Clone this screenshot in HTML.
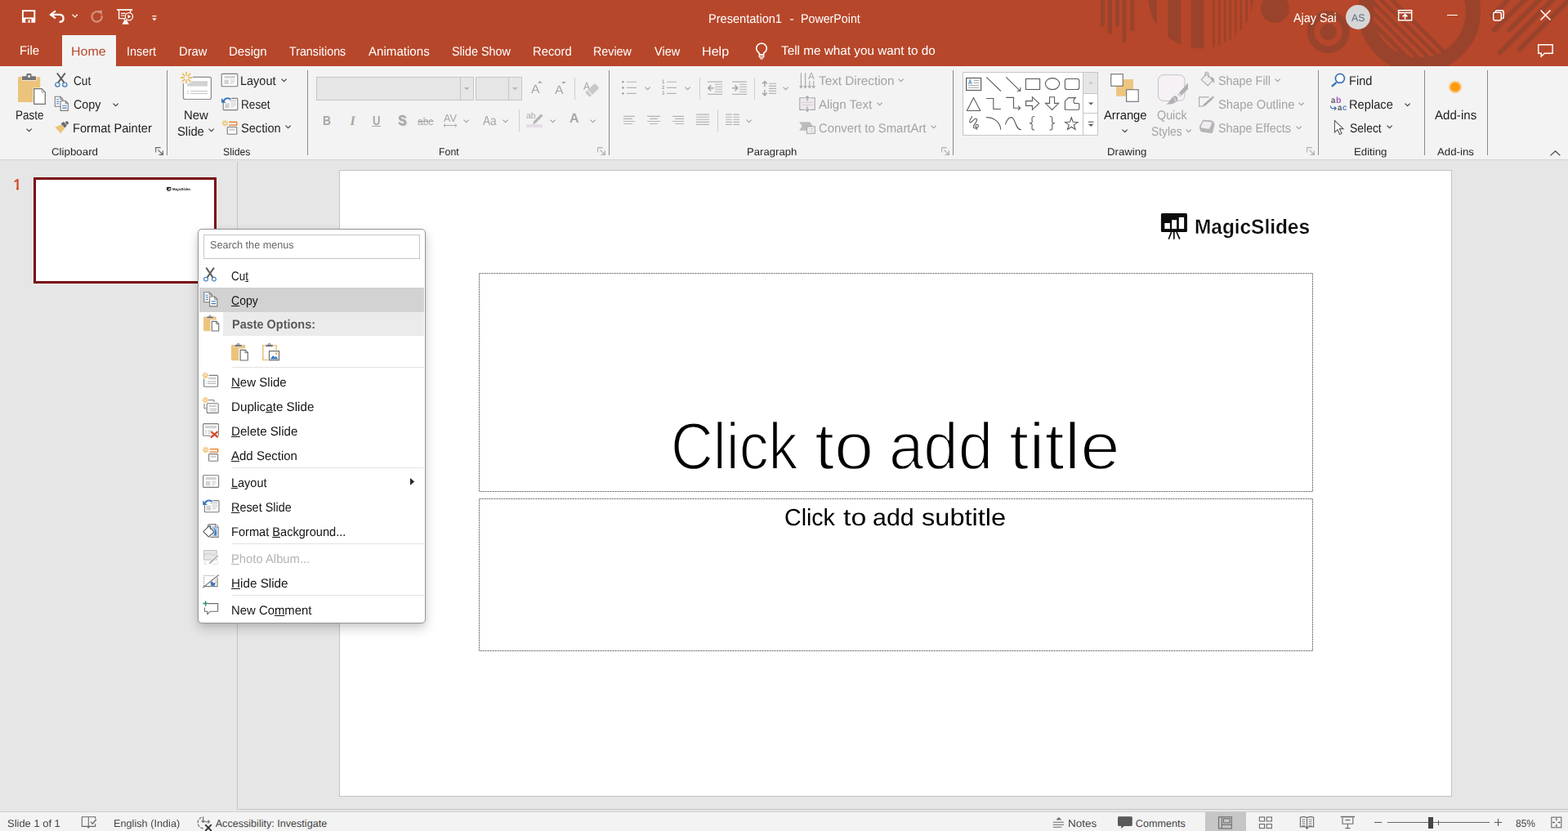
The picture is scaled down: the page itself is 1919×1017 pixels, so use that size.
<!DOCTYPE html>
<html lang="en"><head><meta charset="utf-8"><title>Presentation1 - PowerPoint</title>
<style>
html,body{margin:0;padding:0}
body{width:1919px;height:1017px;overflow:hidden;position:relative;background:#e6e6e6;font-family:"Liberation Sans",sans-serif;text-rendering:geometricPrecision}
#app{position:absolute;left:0;top:0;width:1919px;height:1017px;overflow:hidden}
#app div,#app svg,#app span{position:absolute}
#app span{white-space:nowrap;line-height:1;transform-origin:0 0;display:block}
#app span u{position:static;text-decoration:underline;text-underline-offset:.5px;text-decoration-thickness:1px}
#app svg{overflow:visible}
</style></head>
<body><div id="app">
<div style="left:0px;top:0px;width:1919px;height:81px;background:#b7472a"></div>
<div style="left:0px;top:81px;width:1919px;height:114px;background:#f3f3f3"></div>
<div style="left:0px;top:195px;width:1919px;height:1px;background:#d4d4d4"></div>
<div style="left:0px;top:993px;width:1919px;height:24px;background:#f3f3f3"></div>
<svg style="left:0;top:0" width="1919" height="81" viewBox="0 0 1919 81" fill="#9a432c"><clipPath id="tb"><rect width="1919" height="81"/></clipPath><g clip-path="url(#tb)"><rect x="1346.9" y="0" width="5.0" height="32"/><rect x="1355.8" y="0" width="5.2" height="41.4"/><rect x="1365.2" y="0" width="4.6" height="32"/><rect x="1373.4" y="0" width="5.0" height="51.6"/><rect x="1383" y="0" width="5.3" height="37.8"/><clipPath id="hc"><circle cx="1469.5" cy="-5" r="64.5"/></clipPath><g clip-path="url(#hc)"><rect x="1405" y="0" width="11.0" height="62"/><rect x="1429" y="0" width="16.3" height="62"/><rect x="1457.8" y="0" width="15.6" height="62"/><rect x="1484" y="0" width="2.7" height="62"/><rect x="1491" y="0" width="2.6" height="62"/><rect x="1498" y="0" width="2.2" height="62"/><rect x="1504.2" y="0" width="2.7" height="62"/><rect x="1511" y="0" width="2.3" height="62"/><rect x="1517.5" y="0" width="2.5" height="62"/><rect x="1524.2" y="0" width="2.8" height="62"/><rect x="1530.8" y="0" width="3.2" height="62"/></g><circle cx="1560.5" cy="10.5" r="17.5"/><circle cx="1625.6" cy="39" r="10.2"/><circle cx="1625.6" cy="39" r="21.5" fill="none" stroke="#9a432c" stroke-width="9"/><circle cx="1737.2" cy="14" r="65.7" fill="none" stroke="#9a432c" stroke-width="18.5"/><clipPath id="bc"><circle cx="1737.2" cy="14" r="57.5"/></clipPath><g clip-path="url(#bc)" stroke="#9a432c"><line x1="1673.45" y1="-30" x2="1813.45" y2="110" stroke-width="5.0"/><line x1="1660.65" y1="-30" x2="1800.65" y2="110" stroke-width="4.74"/><line x1="1647.65" y1="-30" x2="1787.65" y2="110" stroke-width="4.74"/><line x1="1635.05" y1="-30" x2="1775.05" y2="110" stroke-width="4.74"/><line x1="1621.90" y1="-30" x2="1761.90" y2="110" stroke-width="5.5"/></g><g stroke="#9a432c" stroke-width="6"><line x1="1825.0" y1="20.3" x2="1865.3" y2="-20"/><line x1="1826.7" y1="38.7" x2="1885.4" y2="-20"/><line x1="1845.2" y1="38.5" x2="1903.7" y2="-20"/><line x1="1833.8" y1="66.1" x2="1919.9" y2="-20"/><line x1="1858.2" y1="62.1" x2="1940.3" y2="-20"/></g></g></svg>
<svg style="left:27px;top:12px" width="17" height="16" viewBox="0 0 17 16" ><rect x=".9" y="1.200" width="14.400" height="13.600" fill="none" stroke="#fff" stroke-width="1.900"/><rect x="1" y="9.400" width="14" height="5.600" fill="#fff"/><rect x="4.200" y="11.200" width="7.200" height="4.400" fill="#b7472a"/><rect x="7.600" y="12.300" width="2" height="3.300" fill="#fff"/></svg>
<svg style="left:60px;top:12px" width="20" height="17" viewBox="0 0 20 17" ><path d="M8 1.400 2 5.900l6 4.500" fill="none" stroke="#fff" stroke-width="2.300" stroke-linejoin="miter"/><path d="M2.600 5.900h9.600c3.800 0 5.400 2.200 5.400 4.600 0 2.600-2 4.400-5 4.400" fill="none" stroke="#fff" stroke-width="2.300"/></svg>
<svg style="left:88px;top:17px" width="8" height="5" viewBox="0 0 8 5" ><path d="M.6.8 3.700 3.900 6.800.8" fill="none" stroke="#fff" stroke-width="1.300"/></svg>
<svg style="left:109.5px;top:11.5px" width="17" height="17" viewBox="0 0 17 17" ><path d="M12.200 3.400A6.200 6.200 0 1 0 14.600 7" fill="none" stroke="#d4917f" stroke-width="2.200"/><path d="M9.600 1.200l5.400-.6-.6 6z" fill="#d4917f"/></svg>
<svg style="left:143px;top:10.5px" width="20" height="19" viewBox="0 0 20 19" ><g fill="none" stroke="#fff" stroke-width="1.400"><path d="M0 1h19.200" stroke-width="1.700"/><path d="M2.600 1.400v10.200h7.200M16.600 1.400v3"/><path d="M5 5.400h5.600M5 8h4.400" stroke-width="1.100"/><path d="M7.600 18.100l2.200-3.900h1.600l2.200 3.900z" fill="#fff"/><path d="M9 12v1.600"/></g><circle cx="14.900" cy="9.300" r="4.600" fill="#b7472a" stroke="#fff" stroke-width="1.300"/><path d="M13.500 6.900v4.800l3.700-2.400z" fill="#fff"/></svg>
<svg style="left:185.5px;top:18.5px" width="6" height="7" viewBox="0 0 6 7" ><path d="M.3 .7h5.200" stroke="#fff" stroke-width="1.200"/><path d="M.2 3.300h5.400L2.900 6.400z" fill="#fff"/></svg>
<span style="left:867.35px;top:16.0px;font-size:15.4px;color:#fff;transform:scaleX(0.9474);">Presentation1</span>
<span style="left:966.60px;top:16.0px;font-size:15.4px;color:#fff;">-</span>
<span style="left:979.58px;top:16.0px;font-size:15.4px;color:#fff;transform:scaleX(0.9244);">PowerPoint</span>
<span style="left:1583.20px;top:15.0px;font-size:15.4px;color:#fff;transform:scaleX(0.9350);">Ajay Sai</span>
<div style="left:1647px;top:6px;width:30px;height:30px;border-radius:50%;background:#d6d6d6"></div>
<span style="left:1654.00px;top:16.0px;font-size:12.5px;color:#5a6b7e;transform:scaleX(0.9793);">AS</span>
<svg style="left:1711px;top:12px" width="18" height="14" viewBox="0 0 18 14" ><g fill="none" stroke="#fff" stroke-width="1.5"><rect x=".65" y=".65" width="16" height="12.2"/><path d="M.6 3.6h16.2"/><path d="M8.6 11.6V5.8M5.8 8.4 8.6 5.6l2.8 2.8"/></g></svg>
<div style="left:1771px;top:17.6px;width:12.5px;height:1.3px;background:#fff"></div>
<svg style="left:1827px;top:12px" width="14" height="14" viewBox="0 0 14 14" ><g fill="none" stroke="#fff" stroke-width="1.5"><rect x=".7" y="3.3" width="9.6" height="9.6" rx="1.6"/><path d="M3.4 3.2V2.4Q3.4.7 5.2.7h5.6q2.4 0 2.4 2.4v5.6q0 1.8-1.7 1.8h-1"/></g></svg>
<svg style="left:1884.5px;top:12.4px" width="13" height="13" viewBox="0 0 13 13" ><path d="M.5.5l12 12M12.5.5l-12 12" stroke="#fff" stroke-width="1.5" fill="none"/></svg>
<svg style="left:1881.5px;top:54px" width="19" height="16" viewBox="0 0 19 16" ><path d="M.7.7h17.4v10.6H8.4L4.2 15v-3.7H.7z" fill="none" stroke="#fff" stroke-width="1.5" stroke-linejoin="miter"/></svg>
<div style="left:76px;top:43px;width:66px;height:39px;background:#f3f3f3"></div>
<span style="left:24.03px;top:55.0px;font-size:15.4px;color:#fff;transform:scaleX(0.9682);">File</span>
<span style="left:86.96px;top:56.0px;font-size:15.4px;color:#b7472a;transform:scaleX(1.0381);">Home</span>
<span style="left:155.37px;top:56.0px;font-size:15.4px;color:#fff;transform:scaleX(0.9342);">Insert</span>
<span style="left:218.54px;top:56.0px;font-size:15.4px;color:#fff;transform:scaleX(0.9581);">Draw</span>
<span style="left:280.32px;top:56.0px;font-size:15.4px;color:#fff;transform:scaleX(0.9752);">Design</span>
<span style="left:354.30px;top:56.0px;font-size:15.4px;color:#fff;transform:scaleX(0.9266);">Transitions</span>
<span style="left:451.00px;top:56.0px;font-size:15.4px;color:#fff;transform:scaleX(0.9812);">Animations</span>
<span style="left:553.30px;top:56.0px;font-size:15.4px;color:#fff;transform:scaleX(0.9334);">Slide Show</span>
<span style="left:652.34px;top:56.0px;font-size:15.4px;color:#fff;transform:scaleX(0.9614);">Record</span>
<span style="left:726.07px;top:56.0px;font-size:15.4px;color:#fff;transform:scaleX(0.9295);">Review</span>
<span style="left:800.80px;top:56.0px;font-size:15.4px;color:#fff;transform:scaleX(0.9421);">View</span>
<span style="left:858.95px;top:56.0px;font-size:15.4px;color:#fff;transform:scaleX(1.0467);">Help</span>
<span style="left:956.30px;top:55.0px;font-size:15.4px;color:#fff;transform:scaleX(0.9939);">Tell me what you want to do</span>
<svg style="left:924px;top:52px" width="17" height="21" viewBox="0 0 17 21" ><g fill="none" stroke="#fff" stroke-width="1.500"><path d="M5.300 14.600v-1.400C3.200 11.600 1.700 9.900 1.700 7.300a6.300 6.300 0 0 1 12.600 0c0 2.600-1.500 4.300-3.600 5.900v1.400"/><path d="M5.300 14.600h5.400v3.300H5.300zM6.200 19.900h3.600" stroke-width="1.300"/><path d="M5.300 15.700h5.400" stroke-width="1"/></g></svg>
<div style="left:204.0px;top:86px;width:1px;height:104px;background:#8a8a8a"></div>
<div style="left:375.9px;top:86px;width:1px;height:104px;background:#8a8a8a"></div>
<div style="left:744.7px;top:86px;width:1px;height:104px;background:#8a8a8a"></div>
<div style="left:1166.0px;top:86px;width:1px;height:104px;background:#8a8a8a"></div>
<div style="left:1613.1px;top:86px;width:1px;height:104px;background:#8a8a8a"></div>
<div style="left:1742.8px;top:86px;width:1px;height:104px;background:#8a8a8a"></div>
<div style="left:1819.9px;top:86px;width:1px;height:104px;background:#8a8a8a"></div>
<span style="left:63.40px;top:180.0px;font-size:12.6px;color:#262626;transform:scaleX(1.0575);">Clipboard</span>
<span style="left:273.30px;top:180.0px;font-size:12.6px;color:#262626;transform:scaleX(0.9764);">Slides</span>
<span style="left:537.32px;top:180.0px;font-size:12.6px;color:#262626;transform:scaleX(0.9797);">Font</span>
<span style="left:914.36px;top:180.0px;font-size:12.6px;color:#262626;transform:scaleX(1.0431);">Paragraph</span>
<span style="left:1355.45px;top:180.0px;font-size:12.6px;color:#262626;transform:scaleX(1.0467);">Drawing</span>
<span style="left:1657.15px;top:180.0px;font-size:12.6px;color:#262626;transform:scaleX(1.0506);">Editing</span>
<span style="left:1759.00px;top:180.0px;font-size:12.6px;color:#262626;transform:scaleX(1.0518);">Add-ins</span>
<svg style="left:189.7px;top:179.5px" width="11" height="11" viewBox="0 0 11 11" ><path d="M.6 6.600V.6H6.600" fill="none" stroke="#666" stroke-width="1.100"/><path d="M3.400 3.400 9 9M4.600 9.300h4.700V4.600" fill="none" stroke="#666" stroke-width="1.200"/></svg>
<svg style="left:730.5px;top:179.5px" width="11" height="11" viewBox="0 0 11 11" ><path d="M.6 6.600V.6H6.600" fill="none" stroke="#b0b0b0" stroke-width="1.100"/><path d="M3.400 3.400 9 9M4.600 9.300h4.700V4.600" fill="none" stroke="#b0b0b0" stroke-width="1.200"/></svg>
<svg style="left:1152px;top:179.5px" width="11" height="11" viewBox="0 0 11 11" ><path d="M.6 6.600V.6H6.600" fill="none" stroke="#b0b0b0" stroke-width="1.100"/><path d="M3.400 3.400 9 9M4.600 9.300h4.700V4.600" fill="none" stroke="#b0b0b0" stroke-width="1.200"/></svg>
<svg style="left:1599px;top:179.5px" width="11" height="11" viewBox="0 0 11 11" ><path d="M.6 6.600V.6H6.600" fill="none" stroke="#b0b0b0" stroke-width="1.100"/><path d="M3.400 3.400 9 9M4.600 9.300h4.700V4.600" fill="none" stroke="#b0b0b0" stroke-width="1.200"/></svg>
<svg style="left:1896.5px;top:183.5px" width="13" height="7" viewBox="0 0 13 7" ><path d="M.6 6.4 6.5 .8 12.4 6.4" fill="none" stroke="#444" stroke-width="1.3"/></svg>
<span style="left:19.03px;top:134.0px;font-size:15.4px;color:#1e1e1e;transform:scaleX(0.8731);">Paste</span>
<svg style="left:31.7px;top:157px" width="7.2" height="5" viewBox="0 0 7.2 5" ><path d="M.5 .6 3.60 3.70 6.70 .6" fill="none" stroke="#444" stroke-width="1.25"/></svg>
<span style="left:90.30px;top:92.0px;font-size:15.4px;color:#1e1e1e;transform:scaleX(0.8835);">Cut</span>
<span style="left:90.00px;top:121.0px;font-size:15.4px;color:#1e1e1e;transform:scaleX(0.9328);">Copy</span>
<svg style="left:137.6px;top:125.5px" width="7.2" height="5" viewBox="0 0 7.2 5" ><path d="M.5 .6 3.60 3.70 6.70 .6" fill="none" stroke="#444" stroke-width="1.25"/></svg>
<span style="left:89.05px;top:150.0px;font-size:15.4px;color:#1e1e1e;transform:scaleX(0.9507);">Format Painter</span>
<span style="left:225.33px;top:134.0px;font-size:15.4px;color:#1e1e1e;transform:scaleX(0.9682);">New</span>
<span style="left:217.20px;top:154.0px;font-size:15.4px;color:#1e1e1e;transform:scaleX(0.9595);">Slide</span>
<svg style="left:254.8px;top:157.2px" width="7.2" height="5" viewBox="0 0 7.2 5" ><path d="M.5 .6 3.60 3.70 6.70 .6" fill="none" stroke="#444" stroke-width="1.25"/></svg>
<span style="left:294.46px;top:92.0px;font-size:15.4px;color:#1e1e1e;transform:scaleX(0.9405);">Layout</span>
<svg style="left:344px;top:95.6px" width="7.2" height="5" viewBox="0 0 7.2 5" ><path d="M.5 .6 3.60 3.70 6.70 .6" fill="none" stroke="#444" stroke-width="1.25"/></svg>
<span style="left:294.52px;top:121.0px;font-size:15.4px;color:#1e1e1e;transform:scaleX(0.8841);">Reset</span>
<span style="left:295.40px;top:150.0px;font-size:15.4px;color:#1e1e1e;transform:scaleX(0.9493);">Section</span>
<svg style="left:349px;top:153px" width="7.2" height="5" viewBox="0 0 7.2 5" ><path d="M.5 .6 3.60 3.70 6.70 .6" fill="none" stroke="#444" stroke-width="1.25"/></svg>
<div style="left:387px;top:94px;width:193px;height:29px;background:#e6e6e6;border:1px solid #c6c6c6;box-sizing:border-box"></div>
<div style="left:563px;top:94px;width:1px;height:29px;background:#c6c6c6"></div>
<svg style="left:568px;top:107px" width="7" height="4" viewBox="0 0 7 4" ><path d="M0 0h6.4L3.2 3.2z" fill="#b4b4b4"/></svg>
<div style="left:582px;top:94px;width:57px;height:29px;background:#e6e6e6;border:1px solid #c6c6c6;box-sizing:border-box"></div>
<div style="left:622px;top:94px;width:1px;height:29px;background:#c6c6c6"></div>
<svg style="left:626.6px;top:107px" width="7" height="4" viewBox="0 0 7 4" ><path d="M0 0h6.4L3.2 3.2z" fill="#b4b4b4"/></svg>
<div style="left:703.2px;top:95px;width:1px;height:27px;background:#cfcfcf"></div>
<div style="left:634.8px;top:134px;width:1px;height:27px;background:#cfcfcf"></div>
<div style="left:856px;top:95px;width:1px;height:27px;background:#cfcfcf"></div>
<div style="left:923px;top:95px;width:1px;height:27px;background:#cfcfcf"></div>
<div style="left:878px;top:134px;width:1px;height:27px;background:#cfcfcf"></div>
<span style="left:1001.80px;top:92.0px;font-size:15.4px;color:#a3a3a3;transform:scaleX(0.9928);">Text Direction</span>
<svg style="left:1098.9px;top:95.5px" width="7.2" height="5" viewBox="0 0 7.2 5" ><path d="M.5 .6 3.60 3.70 6.70 .6" fill="none" stroke="#a3a3a3" stroke-width="1.25"/></svg>
<span style="left:1001.80px;top:121.0px;font-size:15.4px;color:#a3a3a3;transform:scaleX(0.9815);">Align Text</span>
<svg style="left:1073px;top:124.5px" width="7.2" height="5" viewBox="0 0 7.2 5" ><path d="M.5 .6 3.60 3.70 6.70 .6" fill="none" stroke="#a3a3a3" stroke-width="1.25"/></svg>
<span style="left:1001.80px;top:150.0px;font-size:15.4px;color:#a3a3a3;transform:scaleX(0.9670);">Convert to SmartArt</span>
<svg style="left:1139px;top:153.2px" width="7.2" height="5" viewBox="0 0 7.2 5" ><path d="M.5 .6 3.60 3.70 6.70 .6" fill="none" stroke="#a3a3a3" stroke-width="1.25"/></svg>
<div style="left:1178px;top:88px;width:166px;height:78px;background:#fff;border:1px solid #c6c6c6;box-sizing:border-box"></div>
<div style="left:1325px;top:88px;width:19px;height:27px;background:#e6e6e6;border:1px solid #c6c6c6;box-sizing:border-box"></div>
<div style="left:1325px;top:114px;width:19px;height:25px;background:#fff;border:1px solid #c6c6c6;box-sizing:border-box"></div>
<div style="left:1325px;top:138px;width:19px;height:28px;background:#fff;border:1px solid #c6c6c6;box-sizing:border-box"></div>
<span style="left:1350.60px;top:134.0px;font-size:15.4px;color:#1e1e1e;transform:scaleX(0.9595);">Arrange</span>
<svg style="left:1372.8px;top:157.6px" width="7.2" height="5" viewBox="0 0 7.2 5" ><path d="M.5 .6 3.60 3.70 6.70 .6" fill="none" stroke="#444" stroke-width="1.25"/></svg>
<span style="left:1416.00px;top:134.0px;font-size:15.4px;color:#a3a3a3;transform:scaleX(0.9307);">Quick</span>
<span style="left:1408.60px;top:154.0px;font-size:15.4px;color:#a3a3a3;transform:scaleX(0.8954);">Styles</span>
<svg style="left:1451.2px;top:157.6px" width="7.2" height="5" viewBox="0 0 7.2 5" ><path d="M.5 .6 3.60 3.70 6.70 .6" fill="none" stroke="#a3a3a3" stroke-width="1.25"/></svg>
<span style="left:1490.70px;top:92.0px;font-size:15.4px;color:#a3a3a3;transform:scaleX(0.9350);">Shape Fill</span>
<svg style="left:1559.8px;top:95.8px" width="7.2" height="5" viewBox="0 0 7.2 5" ><path d="M.5 .6 3.60 3.70 6.70 .6" fill="none" stroke="#a3a3a3" stroke-width="1.25"/></svg>
<span style="left:1490.70px;top:121.0px;font-size:15.4px;color:#a3a3a3;transform:scaleX(0.9569);">Shape Outline</span>
<svg style="left:1589px;top:124.6px" width="7.2" height="5" viewBox="0 0 7.2 5" ><path d="M.5 .6 3.60 3.70 6.70 .6" fill="none" stroke="#a3a3a3" stroke-width="1.25"/></svg>
<span style="left:1490.70px;top:150.0px;font-size:15.4px;color:#a3a3a3;transform:scaleX(0.9317);">Shape Effects</span>
<svg style="left:1585.5px;top:153.8px" width="7.2" height="5" viewBox="0 0 7.2 5" ><path d="M.5 .6 3.60 3.70 6.70 .6" fill="none" stroke="#a3a3a3" stroke-width="1.25"/></svg>
<span style="left:1651.45px;top:92.0px;font-size:15.4px;color:#1e1e1e;transform:scaleX(0.9478);">Find</span>
<span style="left:1651.45px;top:121.0px;font-size:15.4px;color:#1e1e1e;transform:scaleX(0.9525);">Replace</span>
<svg style="left:1718.8px;top:125.6px" width="7.2" height="5" viewBox="0 0 7.2 5" ><path d="M.5 .6 3.60 3.70 6.70 .6" fill="none" stroke="#444" stroke-width="1.25"/></svg>
<span style="left:1652.40px;top:150.0px;font-size:15.4px;color:#1e1e1e;transform:scaleX(0.9058);">Select</span>
<svg style="left:1696.9px;top:153.2px" width="7.2" height="5" viewBox="0 0 7.2 5" ><path d="M.5 .6 3.60 3.70 6.70 .6" fill="none" stroke="#444" stroke-width="1.25"/></svg>
<span style="left:1756.30px;top:134.0px;font-size:15.4px;color:#1e1e1e;transform:scaleX(0.9812);">Add-ins</span>
<div style="left:1774px;top:99.800px;width:13.600px;height:13.600px;border-radius:50%;background:#ff9a0d;filter:blur(.9px)"></div>
<svg style="left:20px;top:88px" width="38" height="42" viewBox="20 88 38 42" ><rect x="22" y="94" width="27.2" height="31" rx="1.6" fill="#ecc37a"/>
<path d="M26.4 98.8v-4.4q0-1.6 1.6-1.6h3.8v-1.4q0-1.6 1.6-1.6h3.8q1.6 0 1.6 1.6v1.4H43q1.6 0 1.6 1.6v4.4z" fill="#f3f3f3"/>
<path d="M26.9 98v-3.6q0-1.2 1.2-1.2h4.2v-2q0-1.2 1.2-1.2h3.8q1.2 0 1.2 1.2v2h4.3q1.2 0 1.2 1.2V98z" fill="#757575"/>
<rect x="34.3" y="92" width="2.6" height="2.8" fill="#f3f3f3"/>
<path d="M40.4 107.4h11.2l5 5v16.2H40.4z" fill="#f3f3f3"/>
<path d="M41.7 108.7h9.4l4.2 4.2v14.4H41.7z" fill="#fff" stroke="#6e6e6e" stroke-width="1.2"/>
<path d="M51.1 108.9v4h4" fill="none" stroke="#9a9a9a" stroke-width="1"/></svg>
<svg style="left:66px;top:88px" width="18" height="20" viewBox="66 88 18 20" ><path d="M69.900 89.500 78.400 101M79.700 89.500 71.200 101" fill="none" stroke="#5e5e5e" stroke-width="2.100"/>
<circle cx="70.4" cy="103.6" r="2.6" fill="none" stroke="#3b77bc" stroke-width="1.2"/><circle cx="79.3" cy="103.6" r="2.6" fill="none" stroke="#3b77bc" stroke-width="1.2"/></svg>
<svg style="left:66px;top:117px" width="19" height="20" viewBox="66 117 19 20" ><g transform="translate(66.7 117.7)"><path d="M.6.6h6.6l3 3v9H.6z" fill="#fff" stroke="#7a7a7a" stroke-width="1.1"/><path d="M7 .8v3h3" fill="none" stroke="#7a7a7a" stroke-width="1"/>
<path d="M2.4 4h3M2.4 6.6h3.4M2.4 9.2h3.4" stroke="#3b77bc" stroke-width="1"/>
<path d="M7.4 5.8h6.2l3 3v8.9H7.4z" fill="#fff" stroke="#7a7a7a" stroke-width="1.1"/><path d="M13.4 6v3h3" fill="none" stroke="#7a7a7a" stroke-width="1"/>
<path d="M9.4 11.6h5.6M9.4 14.4h5.6" stroke="#3b77bc" stroke-width="1.1"/></g></svg>
<svg style="left:66px;top:147px" width="20" height="18" viewBox="66 147 20 18" ><path d="M67.4 155.6l7.6-3.2 4.4 4.6-5.4 6.2z" fill="#ecc37a"/>
<path d="M74.6 151.4l3-2.4 4.4 4.6-2.6 2.8z" fill="#6a6a6a"/><path d="M79.4 150l2.6-2 2.4 2.4-2.2 2.4z" fill="#6a6a6a"/></svg>
<svg style="left:220px;top:86px" width="40" height="37" viewBox="220 86 40 37" ><rect x="224.4" y="94.3" width="34" height="27.2" rx="2" fill="#fff" stroke="#8a8a8a" stroke-width="1.2"/>
<rect x="229" y="99.2" width="25" height="6.4" fill="#d2d2d2"/>
<path d="M229 111.5h2.2M233.2 111.5h20.8M229 114.5h2.2M233.2 114.5h20.8" stroke="#c4c4c4" stroke-width="1"/>
<circle cx="228.1" cy="95" r="8" fill="#f3f3f3"/><path d="M228.10 97.40L228.10 102.20M226.40 96.70L223.01 100.09M225.70 95.00L220.90 95.00M226.40 93.30L223.01 89.91M228.10 92.60L228.10 87.80M229.80 93.30L233.19 89.91M230.50 95.00L235.30 95.00M229.80 96.70L233.19 100.09" stroke="#ecc06e" stroke-width="1.9" fill="none"/></svg>
<svg style="left:270px;top:89px" width="22" height="18" viewBox="270 89 22 18" ><rect x="271.2" y="90.4" width="19.6" height="15.4" rx="1" fill="#fff" stroke="#7a7a7a" stroke-width="1.1"/>
<rect x="274.4" y="92.60000000000001" width="13.400000000000002" height="3.2" fill="#d2d2d2"/><rect x="274.4" y="97.5" width="5.6" height="5.4" fill="#d2d2d2"/>
<path d="M282.0 97.9h5.600000000000001M282.0 100.0h5.600000000000001M282.0 102.10000000000001h3.6000000000000014" stroke="#c0c0c0" stroke-width=".9"/></svg>
<svg style="left:270px;top:117px" width="22" height="19" viewBox="270 117 22 19" ><g transform="translate(271 118)"><rect x="2.2" y="2.4" width="17.6" height="14.2" rx="1" fill="#fff" stroke="#7a7a7a" stroke-width="1.1"/>
<rect x="9.4" y="4.2" width="8.6" height="2" fill="#d2d2d2"/><rect x="4.3" y="8.3" width="5.4" height="6.3" fill="#d2d2d2"/>
<path d="M11.2 7.9h6.8M11.2 10.1h6.8M11.2 12.3h5" stroke="#c0c0c0" stroke-width=".9"/>
<path d="M-.4 0h6.2v6.2H-.4z" fill="#f3f3f3" opacity="0"/>
<path d="M2.6 6.2C3 2.4 7.4.6 11.6 3.4" fill="none" stroke="#fff" stroke-width="4"/>
<path d="M2.8 6C3.4 2.6 7.6 1 11.4 3.6" fill="none" stroke="#3b77bc" stroke-width="2"/><path d="M0 2.2v5.6h5.6z" fill="#3b77bc"/></g></svg>
<svg style="left:270px;top:146px" width="22" height="20" viewBox="270 146 22 20" ><g transform="translate(271 146.9)"><path d="M4.40 5.10L4.40 7.80M3.55 4.75L1.64 6.66M3.20 3.90L0.50 3.90M3.55 3.05L1.64 1.14M4.40 2.70L4.40 0.00M5.25 3.05L7.16 1.14M5.60 3.90L8.30 3.90M5.25 4.75L7.16 6.66" stroke="#ecc06e" stroke-width="1.3" fill="none"/><path d="M9 2.5h9.8v3.8H9" fill="none" stroke="#e8751a" stroke-width="1.2"/>
<rect x="7.2" y="8.6" width="11.6" height="8.7" rx=".8" fill="#fff" stroke="#7a7a7a" stroke-width="1.1"/><rect x="9.3" y="10.4" width="7.4" height="2.6" fill="#d2d2d2"/></g></svg>
<span style="left:650.00px;top:102.0px;font-size:15px;color:#a6a6a6;transform:scaleX(1.0600);">A</span>
<svg style="left:658px;top:99px" width="6" height="3" viewBox="0 0 6 3" ><path d="M0 2.8h5.8L2.9 0z" fill="#a6a6a6"/></svg>
<span style="left:679.00px;top:103.0px;font-size:15px;color:#a6a6a6;transform:scaleX(1.0600);">A</span>
<svg style="left:687px;top:100px" width="6" height="3" viewBox="0 0 6 3" ><path d="M0 0h5.8L2.9 2.8z" fill="#a6a6a6"/></svg>
<span style="left:714.20px;top:99.0px;font-size:13.5px;color:#a6a6a6;transform:scaleX(0.8889);">A</span>
<svg style="left:716px;top:101px" width="17" height="17" viewBox="716 101 17 17" ><g transform="rotate(-42 724.5 110.5)"><rect x="716.6" y="106.6" width="16.4" height="8" rx="1.4" fill="#c9c7c9"/><rect x="720.2" y="106" width="1.1" height="9.4" fill="#f3f3f3"/></g></svg>
<span style="left:394.73px;top:141.0px;font-size:16px;color:#a6a6a6;transform:scaleX(0.8700);font-weight:bold">B</span>
<span style="left:428.40px;top:141.0px;font-size:16px;color:#a6a6a6;font-weight:bold;font-style:italic;font-family:'Liberation Serif',serif">I</span>
<span style="left:455.90px;top:141.0px;font-size:16px;color:#a6a6a6;transform:scaleX(0.8273);font-weight:bold">U</span>
<div style="left:455.3px;top:153.8px;width:10.4px;height:1.4px;background:#a6a6a6"></div>
<span style="left:486.60px;top:139.0px;font-size:17.5px;color:#a6a6a6;transform:scaleX(0.9091);font-weight:bold;text-shadow:1.2px 1.2px 1.4px #bbb">S</span>
<span style="left:511.20px;top:142.0px;font-size:13px;color:#a6a6a6;transform:scaleX(0.9180);">abc</span>
<div style="left:510.6px;top:148.4px;width:20.8px;height:1px;background:#a6a6a6"></div>
<span style="left:543.10px;top:138.0px;font-size:13px;color:#a6a6a6;transform:scaleX(0.9757);">AV</span>
<svg style="left:542px;top:151px" width="18" height="5" viewBox="542 151 18 5" ><path d="M543 153.5h16M545.2 151.4l-2.2 2.1 2.2 2.1M556.8 151.4l2.2 2.1-2.2 2.1" fill="none" stroke="#a6a6a6" stroke-width="1"/></svg>
<svg style="left:567.1px;top:145.6px" width="7.2" height="5" viewBox="0 0 7.2 5" ><path d="M.5 .6 3.60 3.70 6.70 .6" fill="none" stroke="#a6a6a6" stroke-width="1.25"/></svg>
<span style="left:590.90px;top:141.0px;font-size:16px;color:#a6a6a6;transform:scaleX(0.8489);">Aa</span>
<svg style="left:615px;top:145.6px" width="7.2" height="5" viewBox="0 0 7.2 5" ><path d="M.5 .6 3.60 3.70 6.70 .6" fill="none" stroke="#a6a6a6" stroke-width="1.25"/></svg>
<span style="left:644.40px;top:137.0px;font-size:10.5px;color:#a6a6a6;transform:scaleX(0.9798);">ab</span>
<svg style="left:648px;top:138px" width="18" height="16" viewBox="648 138 18 16" ><path d="M662 139.4l2.6 2.2-9 9.2-3.4 1.4 1-3.6z" fill="#b4b4b4"/></svg>
<div style="left:643.8px;top:152.2px;width:20.2px;height:4px;background:#e6dde6"></div>
<svg style="left:672.8px;top:145.6px" width="7.2" height="5" viewBox="0 0 7.2 5" ><path d="M.5 .6 3.60 3.70 6.70 .6" fill="none" stroke="#a6a6a6" stroke-width="1.25"/></svg>
<span style="left:696.90px;top:137.0px;font-size:16.5px;color:#a6a6a6;transform:scaleX(0.9750);font-weight:bold">A</span>
<svg style="left:721.8px;top:145.6px" width="7.2" height="5" viewBox="0 0 7.2 5" ><path d="M.5 .6 3.60 3.70 6.70 .6" fill="none" stroke="#a6a6a6" stroke-width="1.25"/></svg>
<svg style="left:760px;top:98px" width="20" height="19" viewBox="760 98 20 19" ><circle cx="762.4" cy="100.3" r="1.4" fill="#a6a6a6"/><circle cx="762.4" cy="107.4" r="1.4" fill="#a6a6a6"/><circle cx="762.4" cy="114.4" r="1.4" fill="#a6a6a6"/><path d="M766.9 100.3H778.9M766.9 107.4H778.9M766.9 114.4H778.9" stroke="#b4b4b4" stroke-width="1.1" fill="none"/></svg>
<svg style="left:788.8px;top:106.4px" width="7.2" height="5" viewBox="0 0 7.2 5" ><path d="M.5 .6 3.60 3.70 6.70 .6" fill="none" stroke="#a6a6a6" stroke-width="1.25"/></svg>
<svg style="left:809px;top:96px" width="20" height="21" viewBox="809 96 20 21" ><path d="M816.0 100.3H827.9M816.0 107.4H827.9M816.0 114.4H827.9" stroke="#b4b4b4" stroke-width="1.1" fill="none"/></svg>
<span style="left:809.80px;top:97.5px;font-size:6.5px;color:#a6a6a6;transform:scaleX(0.9000);font-weight:bold">1</span>
<span style="left:809.80px;top:104.5px;font-size:6.5px;color:#a6a6a6;transform:scaleX(0.9000);font-weight:bold">2</span>
<span style="left:809.80px;top:111.5px;font-size:6.5px;color:#a6a6a6;transform:scaleX(0.9000);font-weight:bold">3</span>
<svg style="left:837.8px;top:106.4px" width="7.2" height="5" viewBox="0 0 7.2 5" ><path d="M.5 .6 3.60 3.70 6.70 .6" fill="none" stroke="#a6a6a6" stroke-width="1.25"/></svg>
<svg style="left:865px;top:98px" width="20" height="19" viewBox="865 98 20 19" ><path d="M866.0 100.1H884.0M866.0 115.4H884.0M875.0 103.2H884.0M875.0 106.2H884.0M875.0 109.3H884.0M875.0 112.3H884.0" stroke="#b4b4b4" stroke-width="1.1" fill="none"/><path d="M873.6 107.8H867M870.2 104.4 866.8 107.8 870.2 111.2" fill="none" stroke="#a6a6a6" stroke-width="1.6"/></svg>
<svg style="left:895px;top:98px" width="20" height="19" viewBox="895 98 20 19" ><path d="M896.0 100.1H914.0M896.0 115.4H914.0M905.0 103.2H914.0M905.0 106.2H914.0M905.0 109.3H914.0M905.0 112.3H914.0" stroke="#b4b4b4" stroke-width="1.1" fill="none"/><path d="M896 107.8H902.6M899.4 104.4 902.8 107.8 899.4 111.2" fill="none" stroke="#a6a6a6" stroke-width="1.6"/></svg>
<svg style="left:931px;top:97px" width="20" height="22" viewBox="931 97 20 22" ><path d="M940.9 102.3H950.0M940.9 105.4H950.0M940.9 108.4H950.0M940.9 111.4H950.0M940.9 114.4H950.0" stroke="#b4b4b4" stroke-width="1.1" fill="none"/><path d="M935.9 99.6v6.6M933 102.6l2.9-3 2.9 3M935.9 110v6.8M933 113.8l2.9 3 2.9-3" fill="none" stroke="#a6a6a6" stroke-width="1.5"/></svg>
<svg style="left:957.6px;top:106.4px" width="7.2" height="5" viewBox="0 0 7.2 5" ><path d="M.5 .6 3.60 3.70 6.70 .6" fill="none" stroke="#a6a6a6" stroke-width="1.25"/></svg>
<svg style="left:762px;top:140px" width="16" height="14" viewBox="762 140 16 14" ><path d="M763.0 142.4H777.0M763.0 145.4H774.0M763.0 148.5H777.0M763.0 151.5H774.0" stroke="#b4b4b4" stroke-width="1.1" fill="none"/></svg>
<svg style="left:791px;top:140px" width="18" height="14" viewBox="791 140 18 14" ><path d="M792.0 142.4H808.0M795.2 145.4H804.8M792.0 148.5H808.0M795.2 151.5H804.8" stroke="#b4b4b4" stroke-width="1.1" fill="none"/></svg>
<svg style="left:822px;top:140px" width="16" height="14" viewBox="822 140 16 14" ><path d="M823.0 142.4H837.0M826.2 145.4H837.0M823.0 148.5H837.0M826.2 151.5H837.0" stroke="#b4b4b4" stroke-width="1.1" fill="none"/></svg>
<svg style="left:851px;top:139px" width="18" height="15" viewBox="851 139 18 15" ><path d="M852.0 140.1H868.0M852.0 143.2H868.0M852.0 146.3H868.0M852.0 149.4H868.0M852.0 152.4H868.0" stroke="#b4b4b4" stroke-width="1.1" fill="none"/></svg>
<svg style="left:887px;top:139px" width="19" height="15" viewBox="887 139 19 15" ><path d="M888.1 140.1H895.7M888.1 143.2H895.7M888.1 146.3H895.7M888.1 149.4H895.7M888.1 152.4H895.7M897.3 140.1H905.0M897.3 143.2H905.0M897.3 146.3H905.0M897.3 149.4H905.0M897.3 152.4H905.0" stroke="#b4b4b4" stroke-width="1.1" fill="none"/></svg>
<svg style="left:912.7px;top:145.6px" width="7.2" height="5" viewBox="0 0 7.2 5" ><path d="M.5 .6 3.60 3.70 6.70 .6" fill="none" stroke="#a6a6a6" stroke-width="1.25"/></svg>
<svg style="left:977px;top:88px" width="22" height="21" viewBox="977 88 22 21" ><path d="M980.4 89.2v17.4M985.6 89.2v17.4M990.8 99v7.6M995.7 99v7.6" stroke="#a6a6a6" stroke-width="1.1" fill="none"/><path d="M978.6 105.2 980.4 107.6 982.1999999999999 105.2" fill="none" stroke="#a6a6a6" stroke-width="1.1"/><path d="M983.8000000000001 105.2 985.6 107.6 987.4 105.2" fill="none" stroke="#a6a6a6" stroke-width="1.1"/><path d="M989.0 105.2 990.8 107.6 992.5999999999999 105.2" fill="none" stroke="#a6a6a6" stroke-width="1.1"/><path d="M993.9000000000001 105.2 995.7 107.6 997.5 105.2" fill="none" stroke="#a6a6a6" stroke-width="1.1"/></svg>
<span style="left:989.20px;top:89.0px;font-size:11.5px;color:#a6a6a6;transform:scaleX(1.0125);">A</span>
<svg style="left:977px;top:117px" width="22" height="20" viewBox="977 117 22 20" ><rect x="979" y="120" width="17.6" height="14" fill="#efe9ef"/><path d="M984.6 119.7h-5.8v14.7h5.8M991.4 119.7h5.8v14.7h-5.8" fill="none" stroke="#a6a6a6" stroke-width="1.1"/><path d="M988 118v5.6M985.6 120.2l2.4-2.4 2.4 2.4M988 130.6v5.4M985.6 133.8l2.4 2.4 2.4-2.4" fill="none" stroke="#a6a6a6" stroke-width="1.3"/><path d="M981.6 125.4H994.4M981.6 128.6H994.4" stroke="#cfc8cf" stroke-width="0.9" fill="none"/></svg>
<svg style="left:977px;top:148px" width="22" height="17" viewBox="977 148 22 17" ><path d="M978 149.3h13.4l3.2 5.2-3.2 5.2H978l3.6-5.2z" fill="#bdbdbd"/><rect x="987.5" y="154.9" width="9.8" height="8.4" fill="#f6f1f6" stroke="#a6a6a6" stroke-width="1.1"/><path d="M989.6 157.6h1M991.6 157.6h3.8M989.6 160.4h1M991.6 160.4h3.8" stroke="#bdbdbd" stroke-width=".9"/></svg>
<svg style="left:1178px;top:88px" width="166" height="78" viewBox="1178 88 166 78" ><rect x="1182.6" y="95.5" width="18" height="15" fill="#fff" stroke="#5c5c5c" stroke-width="1.2"/><path d="M1191.6 98.6h6.4M1191.6 101.4h6.4M1184.8 104.4h13.4M1184.8 107.3h13.4" fill="none" stroke="#9a9a9a" stroke-width="0.9" /><path d="M1207.2 94.3 1224.9 111.5" fill="none" stroke="#5c5c5c" stroke-width="1.1" /><path d="M1231.2 94.3 1248.6 111.3M1244.6 111.3h4.2v-4.2" fill="none" stroke="#5c5c5c" stroke-width="1.1" /><rect x="1255.4" y="96.5" width="17.2" height="13" fill="none" stroke="#5c5c5c" stroke-width="1.1"/><ellipse cx="1288" cy="102.6" rx="8.7" ry="7" fill="none" stroke="#5c5c5c" stroke-width="1.1"/><rect x="1303.4" y="96.5" width="17.4" height="13" rx="2.6" fill="none" stroke="#5c5c5c" stroke-width="1.1"/><path d="M1191.5 119.6 1183.4 135.5H1199.7z" fill="none" stroke="#5c5c5c" stroke-width="1.1" /><path d="M1207 120.5h8.8v13h9.1" fill="none" stroke="#5c5c5c" stroke-width="1.1" /><path d="M1231.1 119.4h9.4v12.8h8M1246 129.6l2.7 2.6-2.7 2.6" fill="none" stroke="#5c5c5c" stroke-width="1.1" /><path d="M1255.5 123.6h7.9v-4.9l8.3 7.8-8.3 7.8v-4.9h-7.9z" fill="none" stroke="#5c5c5c" stroke-width="1.1" /><path d="M1284.6 118.8h5.9v7.6h5.1l-8 8.1-8.1-8.1h5.1z" fill="none" stroke="#5c5c5c" stroke-width="1.1" /><path d="M1303.4 134.3v-10.4l4.2-4.3h9.2c-3.4 1.6-3.6 5-1.8 6.9h4.6q1.2 0 1.2 1.2v5.4q0 1.2-1.2 1.2z" fill="none" stroke="#5c5c5c" stroke-width="1.1" /><path d="M1189.6 141.8c.6 2.6-3.8 4.6-3 7.2.9 2.4 3.6-.6 6-3.2 1.600-1.6 3.600-.4 2.9 1.700-1 3-4.800 5.900-4 8.300.7 1.900 3.800 1.400 5.400-.5 1.500-2-.7-3.900-2.300-2.500-1.500 1.500.3 4.200 1.700 6.200" fill="none" stroke="#5c5c5c" stroke-width="1.1" /><path d="M1207 143.6c9.600 0 17.600 6.400 17.600 15.200" fill="none" stroke="#5c5c5c" stroke-width="1.1" /><path d="M1230.2 152.400c1.800-5 4.600-8.800 7.400-8.800 5.400 0 4.600 15.600 12.200 15" fill="none" stroke="#5c5c5c" stroke-width="1.1" /><path d="M1266.2 142.600c-4.600-.4-3 3.800-3 5.800 0 1.600-1.400 2.400-3.400 2.400 2 0 3.400.8 3.400 2.400 0 2-1.600 6.200 3 5.800" fill="none" stroke="#5c5c5c" stroke-width="1.1" /><path d="M1284.6 142.600c4.600-.4 3 3.800 3 5.800 0 1.600 1.400 2.400 3.400 2.400-2 0-3.400.8-3.400 2.400 0 2 1.600 6.200-3 5.800" fill="none" stroke="#5c5c5c" stroke-width="1.1" /><path d="M1311.3 143.7L1313.2 149.2L1319.1 149.4L1314.4 152.9L1316.1 158.5L1311.3 155.2L1306.5 158.5L1308.2 152.9L1303.5 149.4L1309.4 149.2z" fill="none" stroke="#5c5c5c" stroke-width="1.1" /><path d="M1332.2 102.600h5.800l-2.900-3z" fill="#c6c6c6"/><path d="M1332 125.400h6.200l-3.100 3.200z" fill="#5c5c5c"/><path d="M1331.600 149.200h7" stroke="#5c5c5c" stroke-width="1.100"/><path d="M1331.800 151.800h6.600l-3.300 3.300z" fill="#5c5c5c"/></svg>
<span style="left:1185.20px;top:95.8px;font-size:8.5px;color:#3b77bc;transform:scaleX(0.7333);font-weight:bold">A</span>
<svg style="left:1358px;top:89px" width="37" height="37" viewBox="1358 89 37 37" ><rect x="1366" y="97.1" width="21" height="20.7" fill="#edc57e"/>
<rect x="1359.700" y="90.700" width="14.600" height="14.600" fill="#fff" stroke="#7a7a7a" stroke-width="1.200"/>
<rect x="1378.600" y="109.700" width="14.600" height="14.600" fill="#fff" stroke="#7a7a7a" stroke-width="1.200"/></svg>
<svg style="left:1416px;top:90px" width="40" height="40" viewBox="1416 90 40 40" ><rect x="1417.500" y="91.700" width="32.400" height="31.800" rx="6.500" fill="#f5f1f5" stroke="#c4c0c4" stroke-width="1"/>
<path d="M1454 101.200v7.800l-9.800 9.600-3-3z" fill="#b2b0b2"/><path d="M1441.800 113.800l3.400 3.400" stroke="#f5f1f5" stroke-width="1.300"/>
<path d="M1426.800 127.600c4.400-1.200 5.200-6.600 9.200-9.600 2.600-1.800 5.800.4 5.400 3.200-.6 4.200-6.200 6.800-14.600 6.400z" fill="#b2b0b2"/>
<path d="M1436.200 119.200c1.600 1 2.400 2.600 2 5" fill="none" stroke="#f5f1f5" stroke-width="1"/></svg>
<svg style="left:1468px;top:87px" width="20" height="19" viewBox="1468 87 20 19" ><path d="M1476.400 90.400l8.400 7.400-6.600 7-8-7.200z" fill="#f1ecf1" stroke="#adadad" stroke-width="1.200" stroke-linejoin="round"/>
<path d="M1475 93.600v-3.200a2 2 0 0 1 4 0v4.800" fill="none" stroke="#adadad" stroke-width="1.100"/>
<path d="M1482.600 94.400c3.400.4 4.600 4 2.800 8.200-.2-2.800-1.200-4.400-4-5.400z" fill="#adadad"/></svg>
<svg style="left:1466px;top:116px" width="22" height="17" viewBox="1466 116 22 17" ><path d="M1479.600 118.800h-12v11.400h5" fill="none" stroke="#adadad" stroke-width="1.200"/>
<path d="M1484.200 117.400l2 2-11.200 10.200-2.800.8.800-2.800z" fill="#adadad"/><path d="M1482.800 118.800l2 2" stroke="#f3f3f3" stroke-width=".8"/></svg>
<svg style="left:1466px;top:146px" width="22" height="19" viewBox="1466 146 22 19" ><path d="M1470.600 161.200l11.600 1.800q1.400.2 1.800-1.200l2.200-8.600q.4-1.400-.4-2.600l-1.400-2q-.8-1-2.200-1.200l-8.600-.6q-1.400 0-2 1.200l-3.400 6.600q-.6 1.200 0 2.400l1 2.800q.4 1.200 1.400 1.400z" fill="#b6b4b6" style="filter:drop-shadow(0.5px 0.800px 0.700px #c4c4c4)"/>
<path d="M1473.600 148.600l8.200.6q1.800.2 1.200 1.800l-2.200 5.600q-.6 1.400-2.200 1.200l-8-1.200q-1.600-.4-.8-1.800l2.200-5q.6-1.200 1.600-1.200z" fill="#f1ecf1"/></svg>
<svg style="left:1628px;top:88px" width="20" height="20" viewBox="1628 88 20 20" ><circle cx="1639.900" cy="95.900" r="5.500" fill="#fff" stroke="#3a73b5" stroke-width="1.700"/><path d="M1635.600 100.800l-5.800 5" stroke="#3a73b5" stroke-width="2.300" fill="none"/></svg>
<span style="left:1628.90px;top:118.0px;font-size:10.5px;color:#5a5a5a;transform:scaleX(0.9167);font-weight:bold">a</span>
<span style="left:1634.60px;top:118.0px;font-size:10.5px;color:#a05abf;transform:scaleX(1.0167);font-weight:bold">b</span>
<span style="left:1636.90px;top:127.0px;font-size:10.5px;color:#5a5a5a;transform:scaleX(0.9167);font-weight:bold">a</span>
<span style="left:1642.60px;top:127.0px;font-size:10.5px;color:#4a86c8;transform:scaleX(0.8833);font-weight:bold">c</span>
<svg style="left:1627px;top:128px" width="10" height="8" viewBox="1627 128 10 8" ><path d="M1628.400 129.400c0 2.200 1 3.200 3 3.200h3.600M1633 130.400l2.200 2.200-2.200 2.200" fill="none" stroke="#3a73b5" stroke-width="1.200"/></svg>
<svg style="left:1632px;top:146px" width="14" height="20" viewBox="1632 146 14 20" ><path d="M1633.400 147.600v14.400l3.600-3.400 2.600 5.800 2.400-1.200-2.600-5.600h4.600z" fill="#fff" stroke="#5a5a5a" stroke-width="1.100" stroke-linejoin="miter"/></svg>
<div style="left:290px;top:198px;width:1px;height:793px;background:#c6c6c6"></div>
<div style="left:290px;top:990px;width:1629px;height:1px;background:#c6c6c6"></div>
<span style="left:16.20px;top:217.0px;font-size:18.2px;color:#d24726;-webkit-text-stroke:.5px #d24726">1</span>
<div style="left:15px;top:229.5px;width:5px;height:4px;background:#e6e6e6"></div>
<div style="left:23px;top:229.5px;width:4px;height:4px;background:#e6e6e6"></div>
<div style="left:41px;top:217px;width:224.4px;height:130px;background:#fff;border:3px solid #7a0a12;box-sizing:border-box"></div>
<svg style="left:204.2px;top:229px" width="6" height="5.4" viewBox="0 0 6 5.4" ><rect x="0" y="0" width="5.400" height="4" rx=".4" fill="#111"/><path d="M.9 3.300V2.400h1.200V1.700h1.200V1h1.300v2.300z" fill="#eee"/><path d="M1.800 4l-.5 1.400M3.600 4l.5 1.400M2.700 4v1.400" stroke="#111" stroke-width=".5"/></svg>
<span style="left:211.00px;top:230.3px;font-size:4.4px;color:#111;transform:scaleX(0.8714);font-weight:bold">MagicSlides</span>
<div style="left:415px;top:208px;width:1362px;height:767px;background:#fff;border:1px solid #c3c3c3;box-sizing:border-box"></div>
<svg style="left:580px;top:330px" width="1034" height="472" viewBox="580 330 1034 472"><g fill="none" stroke="#686868" stroke-width="1" stroke-dasharray="2 1"><rect x="586.500" y="334.500" width="1020" height="267"/><rect x="586.500" y="610.500" width="1020" height="186"/></g></svg>
<svg style="left:1420px;top:260px" width="34" height="34" viewBox="1420 260 34 34" ><rect x="1420.900" y="260.900" width="32" height="23.200" rx="1.600" fill="#0b0b0b"/>
<rect x="1425.300" y="273" width="6.600" height="7.100" fill="#fff"/><rect x="1434.100" y="269.200" width="6" height="10.900" fill="#fff"/><rect x="1442.800" y="265.900" width="6.300" height="14.200" fill="#fff"/>
<path d="M1433.600 284l-3.300 8.700M1436.800 284v8.700M1440 284l3.800 8.700" stroke="#0b0b0b" stroke-width="1.700" fill="none"/></svg>
<span style="left:1462.42px;top:266.0px;font-size:25px;color:#0b0b0b;transform:scaleX(0.9755);font-weight:bold;-webkit-text-stroke:.3px #fff;paint-order:fill stroke">MagicSlides</span>
<span style="left:820.76px;top:507.0px;font-size:81px;color:#000;transform:scaleX(0.8861);-webkit-text-stroke:2px #fff;paint-order:fill stroke">Click</span>
<span style="left:996.73px;top:507.0px;font-size:81px;color:#000;transform:scaleX(1.0708);-webkit-text-stroke:2px #fff;paint-order:fill stroke">to</span>
<span style="left:1088.38px;top:507.0px;font-size:81px;color:#000;transform:scaleX(0.9402);-webkit-text-stroke:2px #fff;paint-order:fill stroke">add</span>
<span style="left:1235.02px;top:507.0px;font-size:81px;color:#000;transform:scaleX(1.0762);-webkit-text-stroke:2px #fff;paint-order:fill stroke">title</span>
<span style="left:960.31px;top:620.0px;font-size:29px;color:#000;transform:scaleX(0.9851);">Click</span>
<span style="left:1032.10px;top:620.0px;font-size:29px;color:#000;transform:scaleX(1.1667);">to</span>
<span style="left:1067.75px;top:620.0px;font-size:29px;color:#000;transform:scaleX(1.0485);">add</span>
<span style="left:1128.20px;top:620.0px;font-size:29px;color:#000;transform:scaleX(1.1228);">subtitle</span>
<div style="left:242px;top:280px;width:279px;height:483px;box-sizing:border-box;background:#fff;border:1px solid #979797;border-radius:5px;box-shadow:0 6px 14px rgba(0,0,0,.19),0 1px 4px rgba(0,0,0,.08)"></div>
<div style="left:249px;top:287px;width:265px;height:30px;background:#fff;border:1px solid #c6c6c6;box-sizing:border-box"></div>
<span style="left:257.20px;top:294.0px;font-size:12.8px;color:#666;transform:scaleX(0.9888);">Search the menus</span>
<div style="left:244px;top:352px;width:275px;height:29.5px;background:#d2d2d2"></div>
<div style="left:273px;top:382px;width:246px;height:29px;background:#ebebeb"></div>
<div style="left:283.8px;top:449px;width:235px;height:1px;background:#e2e2e2"></div>
<div style="left:283.8px;top:572px;width:235px;height:1px;background:#e2e2e2"></div>
<div style="left:283.8px;top:665.3px;width:235px;height:1px;background:#e2e2e2"></div>
<div style="left:283.8px;top:728.3px;width:235px;height:1px;background:#e2e2e2"></div>
<span style="left:283.40px;top:331.0px;font-size:15.4px;color:#141414;transform:scaleX(0.8754);">Cu<u>t</u></span>
<span style="left:283.40px;top:361.0px;font-size:15.4px;color:#141414;transform:scaleX(0.9135);"><u>C</u>opy</span>
<span style="left:283.76px;top:390.0px;font-size:15.4px;color:#5a5a5a;transform:scaleX(0.9391);font-weight:bold">Paste Options:</span>
<span style="left:283.02px;top:461.0px;font-size:15.4px;color:#141414;transform:scaleX(0.9774);"><u>N</u>ew Slide</span>
<span style="left:283.01px;top:491.0px;font-size:15.4px;color:#141414;transform:scaleX(0.9871);">Duplic<u>a</u>te Slide</span>
<span style="left:283.02px;top:521.0px;font-size:15.4px;color:#141414;transform:scaleX(0.9800);"><u>D</u>elete Slide</span>
<span style="left:283.20px;top:551.0px;font-size:15.4px;color:#141414;transform:scaleX(0.9753);"><u>A</u>dd Section</span>
<span style="left:283.06px;top:584.0px;font-size:15.4px;color:#141414;transform:scaleX(0.9405);"><u>L</u>ayout</span>
<span style="left:283.06px;top:614.0px;font-size:15.4px;color:#141414;transform:scaleX(0.9359);"><u>R</u>eset Slide</span>
<span style="left:283.05px;top:644.0px;font-size:15.4px;color:#141414;transform:scaleX(0.9485);">Format <u>B</u>ackground...</span>
<span style="left:283.04px;top:677.0px;font-size:15.4px;color:#b4b4b4;transform:scaleX(0.9618);"><u>P</u>hoto Album...</span>
<span style="left:283.01px;top:707.0px;font-size:15.4px;color:#141414;transform:scaleX(0.9914);"><u>H</u>ide Slide</span>
<span style="left:283.03px;top:740.0px;font-size:15.4px;color:#141414;transform:scaleX(0.9665);">New Co<u>m</u>ment</span>
<svg style="left:502px;top:585.4px" width="6" height="9" viewBox="0 0 6 9" ><path d="M0 0v8.800l5.200-4.400z" fill="#262626"/></svg>
<svg style="left:248px;top:326px" width="18" height="19" viewBox="248 326 18 19" ><path d="M252.300 327.600 260.600 339.600M261.900 327.600 253.600 339.600" fill="none" stroke="#5e5e5e" stroke-width="2"/>
<circle cx="252" cy="341.600" r="2.400" fill="#fff" stroke="#3b77bc" stroke-width="1.100"/><circle cx="261.900" cy="341.600" r="2.400" fill="#fff" stroke="#3b77bc" stroke-width="1.100"/></svg>
<svg style="left:248px;top:356px" width="19" height="20" viewBox="248 356 19 20" ><g transform="translate(249.2 357.2)"><path d="M.6.6h6.6l3 3v9H.6z" fill="#fff" stroke="#7a7a7a" stroke-width="1.1"/><path d="M7 .8v3h3" fill="none" stroke="#7a7a7a" stroke-width="1"/>
<path d="M2.4 4h3M2.4 6.6h3.4M2.4 9.2h3.4" stroke="#3b77bc" stroke-width="1"/>
<path d="M7.4 5.8h6.2l3 3v8.9H7.4z" fill="#fff" stroke="#7a7a7a" stroke-width="1.1"/><path d="M13.4 6v3h3" fill="none" stroke="#7a7a7a" stroke-width="1"/>
<path d="M9.4 11.6h5.6M9.4 14.4h5.6" stroke="#3b77bc" stroke-width="1.1"/></g></svg>
<svg style="left:248px;top:384px" width="22" height="23" viewBox="248 384 22 23" ><g transform="translate(249.1 385) scale(1.0)"><rect x="0" y="2.600" width="15.600" height="17.600" rx="1.200" fill="#ecc37a"/>
<path d="M3.600 4.800v-1.600q0-.9.900-.9h1.600q.2-2.100 1.800-2.100t1.800 2.100h1.600q.9 0 .9.900v1.600z" fill="#6e6e6e" stroke="#fff" stroke-width=".6"/><circle cx="7.900" cy="1.900" r=".7" fill="#fff"/>
<path d="M9.600 7.800h6.400l3.200 3.200v9.600H9.600z" fill="#fff" stroke="#fff" stroke-width="2.400"/><path d="M10.200 8.400h5.600l2.800 2.800v8.800h-8.400z" fill="#fff" stroke="#6e6e6e" stroke-width="1.100"/><path d="M15.600 8.600v2.800h2.800" fill="none" stroke="#6e6e6e" stroke-width=".9"/></g></svg>
<svg style="left:282px;top:418px" width="24" height="25" viewBox="282 418 24 25" ><g transform="translate(283 419.2) scale(1.09)"><rect x="0" y="2.600" width="15.600" height="17.600" rx="1.200" fill="#ecc37a"/>
<path d="M3.600 4.800v-1.600q0-.9.900-.9h1.600q.2-2.100 1.800-2.100t1.800 2.100h1.600q.9 0 .9.900v1.600z" fill="#6e6e6e" stroke="#fff" stroke-width=".6"/><circle cx="7.900" cy="1.900" r=".7" fill="#fff"/>
<path d="M9.600 7.800h6.400l3.200 3.200v9.600H9.600z" fill="#fff" stroke="#fff" stroke-width="2.400"/><path d="M10.200 8.400h5.600l2.800 2.800v8.800h-8.400z" fill="#fff" stroke="#6e6e6e" stroke-width="1.100"/><path d="M15.600 8.600v2.800h2.800" fill="none" stroke="#6e6e6e" stroke-width=".9"/></g></svg>
<svg style="left:320px;top:418px" width="24" height="25" viewBox="320 418 24 25" ><g transform="translate(321 419.200) scale(1.090)"><path d="M.700 3.300h15v16.200H.700z" fill="none" stroke="#ecc37a" stroke-width="1.500" stroke-linejoin="round"/>
<path d="M3.600 4.800v-1.600q0-.9.900-.9h1.600q.2-2.100 1.800-2.100t1.800 2.100h1.600q.9 0 .9.900v1.600z" fill="#6e6e6e" stroke="#fff" stroke-width=".6"/><circle cx="7.900" cy="1.900" r=".7" fill="#fff"/>
<rect x="6.600" y="8.400" width="13.200" height="12.400" fill="#fff"/><rect x="7.800" y="9.600" width="11" height="10.200" fill="#fff" stroke="#6e6e6e" stroke-width="1.100"/>
<path d="M9 18.600l3-4.200 2 2.200 1.400-1.200 2.600 3.200z" fill="#3b77bc"/><circle cx="15.600" cy="12.400" r="1.100" fill="#f0a03c"/></g></svg>
<svg style="left:247px;top:455px" width="21" height="20" viewBox="247 455 21 20" ><rect x="249.600" y="459.400" width="17" height="13.800" rx="1" fill="#fff" stroke="#7a7a7a" stroke-width="1.100"/><rect x="255" y="461.600" width="9.600" height="2.800" fill="#d2d2d2"/>
<path d="M251.800 467h1M254 467h10.600M251.800 469.400h1M254 469.400h10.600M251.800 471h0" stroke="#a8a8a8" stroke-width=".9"/><circle cx="251.400" cy="459.600" r="4.400" fill="#fff"/><path d="M251.40 460.60L251.40 463.60M250.69 460.31L248.57 462.43M250.40 459.60L247.40 459.60M250.69 458.89L248.57 456.77M251.40 458.60L251.40 455.60M252.11 458.89L254.23 456.77M252.40 459.60L255.40 459.60M252.11 460.31L254.23 462.43" stroke="#ecc06e" stroke-width="1.2" fill="none"/></svg>
<svg style="left:247px;top:485px" width="22" height="22" viewBox="247 485 22 22" ><path d="M254.600 489.600h7.400v2.400M250 494v5.800h2.400" fill="none" stroke="#7a7a7a" stroke-width="1"/>
<rect x="253.200" y="493.800" width="14" height="11.600" rx="1" fill="#fff" stroke="#7a7a7a" stroke-width="1.100"/><rect x="255.400" y="495.800" width="9.600" height="2.400" fill="#d2d2d2"/>
<path d="M255.400 500.600h1M257.400 500.600h7.600M255.400 502.800h1M257.400 502.800h7.600" stroke="#a8a8a8" stroke-width=".9"/><path d="M251.40 490.60L251.40 493.40M250.69 490.31L248.71 492.29M250.40 489.60L247.60 489.60M250.69 488.89L248.71 486.91M251.40 488.60L251.40 485.80M252.11 488.89L254.09 486.91M252.40 489.60L255.20 489.60M252.11 490.31L254.09 492.29" stroke="#ecc06e" stroke-width="1.2" fill="none"/></svg>
<svg style="left:247px;top:517px" width="22" height="20" viewBox="247 517 22 20" ><rect x="248.600" y="518.600" width="18.800" height="14.600" rx="1" fill="#fff" stroke="#7a7a7a" stroke-width="1.100"/><rect x="251" y="521" width="14" height="3.200" fill="#d2d2d2"/>
<path d="M251 527.400h2M254.400 527.400h6M251 530h2M254.400 530h4" stroke="#a8a8a8" stroke-width=".9"/>
<path d="M258.200 528.200l8.600 7M266.600 528l-8.200 7.400" stroke="#fff" stroke-width="3.400" fill="none"/><path d="M258.400 528.400l8.400 6.800M266.600 528.200l-8.600 7.400" stroke="#d04a2c" stroke-width="2.200" fill="none"/></svg>
<svg style="left:247px;top:545px" width="22" height="21" viewBox="247 545 22 21" ><path d="M251.80 551.60L251.80 554.60M251.09 551.31L248.97 553.43M250.80 550.60L247.80 550.60M251.09 549.89L248.97 547.77M251.80 549.60L251.80 546.60M252.51 549.89L254.63 547.77M252.80 550.60L255.80 550.60M252.51 551.31L254.63 553.43" stroke="#ecc06e" stroke-width="1.2" fill="none"/><path d="M256.600 549.600h10v3.600h-10" fill="none" stroke="#e8751a" stroke-width="1.200"/>
<rect x="255.600" y="555.600" width="11" height="8.600" rx=".8" fill="#fff" stroke="#7a7a7a" stroke-width="1.100"/><rect x="257.600" y="557.600" width="7" height="2.400" fill="#d2d2d2"/></svg>
<svg style="left:247px;top:580px" width="22" height="18" viewBox="247 580 22 18" ><rect x="248.6" y="581.8" width="19" height="14.6" rx="1" fill="#fff" stroke="#7a7a7a" stroke-width="1.1"/>
<rect x="251.79999999999998" y="584.0" width="12.8" height="3.2" fill="#d2d2d2"/><rect x="251.79999999999998" y="588.9" width="5.6" height="5.4" fill="#d2d2d2"/>
<path d="M259.4 589.3h5M259.4 591.4h5M259.4 593.5h3" stroke="#c0c0c0" stroke-width=".9"/></svg>
<svg style="left:247px;top:609px" width="22" height="19" viewBox="247 609 22 19" ><g transform="translate(248.2 610.2)"><rect x="2.2" y="2.4" width="17.6" height="14.2" rx="1" fill="#fff" stroke="#7a7a7a" stroke-width="1.1"/>
<rect x="9.4" y="4.2" width="8.6" height="2" fill="#d2d2d2"/><rect x="4.3" y="8.3" width="5.4" height="6.3" fill="#d2d2d2"/>
<path d="M11.2 7.9h6.8M11.2 10.1h6.8M11.2 12.3h5" stroke="#c0c0c0" stroke-width=".9"/>
<path d="M-.4 0h6.2v6.2H-.4z" fill="#f3f3f3" opacity="0"/>
<path d="M2.6 6.2C3 2.4 7.4.6 11.6 3.4" fill="none" stroke="#fff" stroke-width="4"/>
<path d="M2.8 6C3.4 2.6 7.6 1 11.4 3.6" fill="none" stroke="#3b77bc" stroke-width="2"/><path d="M0 2.2v5.6h5.6z" fill="#3b77bc"/></g></svg>
<svg style="left:247px;top:639px" width="22" height="20" viewBox="247 639 22 20" ><path d="M257.400 641.600h6.400l3.400 3.400v12.400h-10" fill="#fff" stroke="#7a7a7a" stroke-width="1.100"/>
<path d="M258.600 643.400h4.800l2.800 2.800v10.200h-6.600z" fill="#b9d3ee"/><path d="M263.600 641.800v3.400h3.400" fill="#fff" stroke="#7a7a7a" stroke-width=".9"/>
<path d="M259.600 645.200c3.200 1.200 4.200 5 2.400 10.400h2.600c1.200-5.600-.6-9.400-5-10.400z" fill="#3b77bc"/>
<path d="M255.800 643.600l6 7.600-6.400 5.800-6.600-6.400z" fill="#fff" stroke="#5e5e5e" stroke-width="1.100" stroke-linejoin="round"/>
<path d="M254.400 645.600v-2.400a1.500 1.500 0 0 1 3 0v4.600" fill="none" stroke="#5e5e5e" stroke-width="1"/></svg>
<svg style="left:247px;top:672px" width="22" height="21" viewBox="247 672 22 21" ><rect x="249.600" y="673.600" width="15.600" height="11.600" fill="#e9e6e9" stroke="#c4c4c4" stroke-width="1.100"/><path d="M250.400 679.600c3-3 6-2.600 8.400-1s4 .6 6-1" fill="none" stroke="#d2d2d2" stroke-width="1.300"/>
<path d="M250.600 687v3.600h3M261 690.600h5.600v-4" fill="none" stroke="#c8c8c8" stroke-width="1" stroke-dasharray="1.400 1"/>
<path d="M266 678.600l1.800 1.800-9.800 9.600-3 1 .8-3z" fill="#b6b6b6" stroke="#fff" stroke-width=".8"/></svg>
<svg style="left:247px;top:702px" width="22" height="19" viewBox="247 702 22 19" ><path d="M249.600 717v-12.400h14" fill="none" stroke="#8a8a8a" stroke-width="1" stroke-dasharray="1.200 1.200"/><path d="M249.600 717.600h16.400v-11" fill="none" stroke="#7a7a7a" stroke-width="1.100"/>
<path d="M248.200 719.200 267.800 703.400" stroke="#6e6e6e" stroke-width="1.100"/><path d="M259.600 711.400a2.900 2.900 0 1 0 3.600 1.600l-2 .4z" fill="#3b77bc"/><path d="M262.400 708.600c1.800 1.400 2.200 3.600 1 5.400" fill="none" stroke="#d6a8a0" stroke-width="1"/></svg>
<svg style="left:247px;top:734px" width="22" height="20" viewBox="247 734 22 20" ><path d="M254.600 738.600h12v9.600h-9.200l-3.600 3.400v-3.400h-3.400v-4.800" fill="none" stroke="#6e6e6e" stroke-width="1.100"/>
<path d="M251.600 735.400v6.400M248.400 738.600h6.400" stroke="#2f8f6a" stroke-width="1.500"/></svg>
<div style="left:0px;top:993px;width:1919px;height:1px;background:#d0d0d0"></div>
<span style="left:9.20px;top:1002.0px;font-size:12.6px;color:#444;transform:scaleX(1.0284);">Slide 1 of 1</span>
<span style="left:139.09px;top:1002.0px;font-size:12.6px;color:#444;transform:scaleX(1.0087);">English (India)</span>
<span style="left:263.70px;top:1002.0px;font-size:12.6px;color:#444;">Accessibility: Investigate</span>
<span style="left:1307.42px;top:1002.0px;font-size:12.6px;color:#444;transform:scaleX(1.0759);">Notes</span>
<span style="left:1389.80px;top:1002.0px;font-size:12.6px;color:#444;">Comments</span>
<span style="left:1855.40px;top:1002.0px;font-size:12.6px;color:#444;transform:scaleX(0.9517);">85%</span>
<svg style="left:99px;top:998px" width="21" height="17" viewBox="99 998 21 17" ><path d="M108.300 999.700h-8v11.700h16.400v-3.400M108.300 999.700h8.400v2.200M108.300 999.700v13.300" fill="none" stroke="#6a6a6a" stroke-width="1.100"/><path d="M106.800 1011.800l1.500 1.600 1.500-1.600" fill="none" stroke="#6a6a6a" stroke-width="1"/><path d="M111 1005.600l2.300 2.500 4.500-5.300" fill="none" stroke="#6a6a6a" stroke-width="1.400"/></svg>
<svg style="left:240px;top:998px" width="22" height="19" viewBox="240 998 22 19" ><path d="M246.800 1000.300a7 7 0 0 0 2.600 13.600" fill="none" stroke="#6a6a6a" stroke-width="1.200" stroke-dasharray="3.600 1.500"/><path d="M248.600 999.200v7M246.600 1004.400l2 2 2-2M250.400 1005.700h5.800M254.400 1003.700l2 2-2 2" fill="none" stroke="#6a6a6a" stroke-width="1.100"/><path d="M251.200 1009.200l7.600 7.800M258.800 1009.200l-7.600 7.800" stroke="#333" stroke-width="1.900" fill="none"/></svg>
<svg style="left:1288px;top:999px" width="15" height="15" viewBox="1288 999 15 15" ><path d="M1292.400 1003.600h7l-3.500-3.600z" fill="#6a6a6a"/><path d="M1288.800 1006.200h13.200M1288.800 1009.200h13.200M1288.800 1012.200h10.400" stroke="#6a6a6a" stroke-width="1.100"/></svg>
<svg style="left:1367px;top:998px" width="20" height="17" viewBox="1367 998 20 17" ><path d="M1369.400 999.300h15q1.400 0 1.400 1.400v8.800q0 1.400-1.400 1.400h-8.600l-3.600 3.200v-3.200h-2.800q-1.400 0-1.400-1.400v-8.800q0-1.400 1.400-1.400z" fill="#595959"/></svg>
<div style="left:1475.2px;top:994px;width:49.6px;height:23px;background:#c6c6c6"></div>
<svg style="left:1490px;top:998px" width="19" height="18" viewBox="1490 998 19 18" ><rect x="1491.500" y="999.800" width="15.800" height="14.200" fill="none" stroke="#6a6a6a" stroke-width="1.100"/><path d="M1495.300 1000v14" stroke="#6a6a6a" stroke-width="1.100"/><rect x="1497.500" y="1001.800" width="7.600" height="5.200" fill="none" stroke="#6a6a6a" stroke-width="1.100"/><path d="M1495.300 1009.400h12" stroke="#6a6a6a" stroke-width="1.100"/></svg>
<svg style="left:1540px;top:998px" width="18" height="18" viewBox="1540 998 18 18" ><rect x="1541.4" y="1000" width="6.200" height="5" fill="none" stroke="#6a6a6a" stroke-width="1.100"/><rect x="1541.4" y="1008.6" width="6.200" height="5" fill="none" stroke="#6a6a6a" stroke-width="1.100"/><rect x="1550.2" y="1000" width="6.200" height="5" fill="none" stroke="#6a6a6a" stroke-width="1.100"/><rect x="1550.2" y="1008.6" width="6.200" height="5" fill="none" stroke="#6a6a6a" stroke-width="1.100"/></svg>
<svg style="left:1590px;top:998px" width="19" height="18" viewBox="1590 998 19 18" ><path d="M1599.500 1000.400c-2.800-1-5.600-1-8.100-.2v11.800c2.600-.6 5.400-.6 8.100.6 2.700-1.200 5.500-1.200 8.100-.6v-11.800c-2.500-.8-5.300-.8-8.100.2zM1599.500 1000.400v14" fill="none" stroke="#6a6a6a" stroke-width="1.100"/><path d="M1593.400 1003h4M1593.400 1005.400h4M1593.400 1007.800h4M1593.400 1010.200h4M1601.600 1003h4M1601.600 1005.400h4M1601.600 1007.800h4M1601.600 1010.200h4" stroke="#6a6a6a" stroke-width=".8"/><path d="M1598 1013l1.500 1.400 1.500-1.400" fill="none" stroke="#6a6a6a" stroke-width=".9"/></svg>
<svg style="left:1640px;top:998px" width="19" height="18" viewBox="1640 998 19 18" ><path d="M1640.800 999.600h17.200" stroke="#6a6a6a" stroke-width="1.500"/><path d="M1643 1000.400v7.800h12.800v-7.800M1649.400 1008.400v5.200M1646.400 1013.600h6M1646.400 1003.600h6" fill="none" stroke="#6a6a6a" stroke-width="1.100"/></svg>
<div style="left:1682.4px;top:1006.2px;width:8.6px;height:1.2px;background:#555"></div>
<div style="left:1698px;top:1006.3px;width:125px;height:1px;background:#6a6a6a"></div>
<div style="left:1748.3px;top:999.7px;width:5.5px;height:14px;background:#454545"></div>
<div style="left:1760px;top:1003.8px;width:1px;height:6.6px;background:#555"></div>
<div style="left:1829.2px;top:1006.2px;width:9.2px;height:1.2px;background:#555"></div>
<div style="left:1833.2px;top:1002.2px;width:1.2px;height:9.2px;background:#555"></div>
<svg style="left:1898px;top:999px" width="14" height="15" viewBox="1898 999 14 15" ><rect x="1898.800" y="1000.200" width="12" height="12.600" fill="none" stroke="#6a6a6a" stroke-width="1.100"/><path d="M1904.800 1001.600v3M1904.800 1011.400v-3M1900.200 1006.500h3M1909.400 1006.500h-3" stroke="#6a6a6a" stroke-width="1"/><path d="M1903.600 1003l1.200-1.400 1.200 1.400M1903.600 1010l1.200 1.400 1.200-1.400M1901.600 1005.300l-1.400 1.200 1.400 1.200M1908 1005.300l1.400 1.200-1.400 1.200" fill="none" stroke="#6a6a6a" stroke-width=".8"/></svg>
</div></body></html>
